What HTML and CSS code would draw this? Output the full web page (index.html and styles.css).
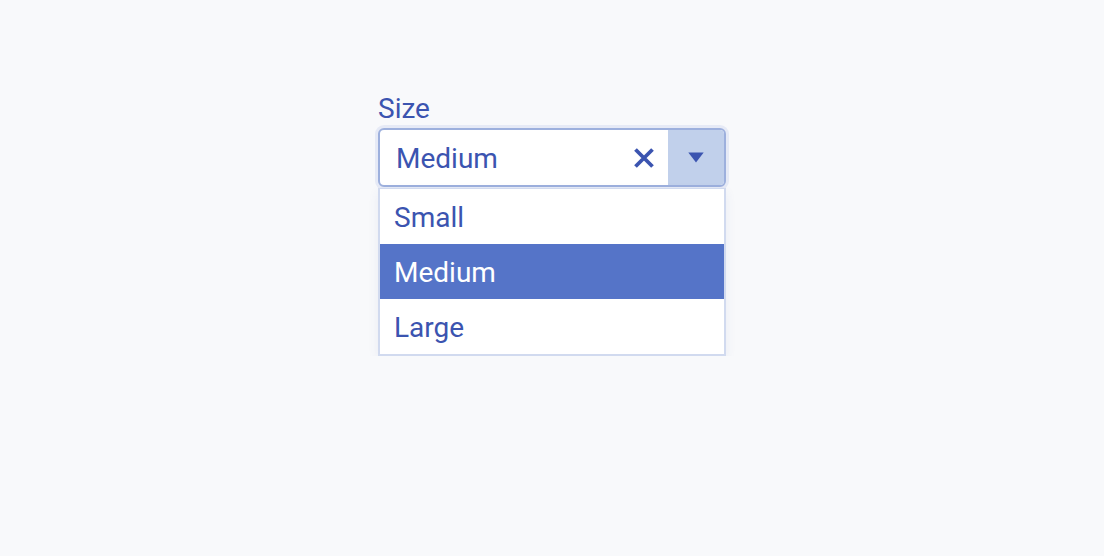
FILE: index.html
```html
<!DOCTYPE html>
<html lang="en">
<head>
<meta charset="utf-8">
<title>Size select</title>
<link rel="stylesheet" href="styles.css">
</head>
<body>
<div class="field">
  <label class="label">Size</label>
  <div class="control">
    <span class="value">Medium</span>
    <button class="clear" aria-label="Clear">
      <svg width="20" height="20" viewBox="0 0 20 20"><path d="M1.5 1.5 L18.5 18.5 M18.5 1.5 L1.5 18.5" stroke="#3b54b0" stroke-width="3.8" stroke-linecap="butt" fill="none"/></svg>
    </button>
    <button class="toggle" aria-label="Open">
      <svg width="16" height="11" viewBox="0 0 16 11"><path d="M0.3 0.5 H15.7 L8 10.5 Z" fill="#3b54b0"/></svg>
    </button>
  </div>
  <ul class="menu">
    <li class="option">Small</li>
    <li class="option selected">Medium</li>
    <li class="option">Large</li>
  </ul>
</div>
</body>
</html>
```
FILE: styles.css
```css
html, body {
  margin: 0;
  padding: 0;
  background: #f8f9fb;
  font-family: Roboto, "Liberation Sans", sans-serif;
  color: #3b54b0;
}
body {
  padding-top: 92px;
}
.field {
  width: 348px;
  margin: 0 auto;
  display: flex;
  flex-direction: column;
}
.label {
  font-size: 28px;
  line-height: 33px;
  margin-bottom: 3px;
}
.control {
  box-sizing: border-box;
  height: 59px;
  border: 2px solid #9db0dd;
  border-radius: 6px;
  background: #fff;
  box-shadow: 0 0 0 3px #e6eaf6;
  display: flex;
  align-items: stretch;
  overflow: hidden;
}
.value {
  flex: 1;
  display: flex;
  align-items: center;
  padding-left: 16px;
  padding-top: 2px;
  font-size: 28px;
}
.clear {
  border: 0;
  background: transparent;
  padding: 0;
  width: 48px;
  display: flex;
  align-items: center;
  justify-content: center;
  padding-top: 1px;
}
.toggle {
  border: 0;
  padding: 0;
  width: 56px;
  background: #c1d0eb;
  display: flex;
  align-items: center;
  justify-content: center;
  padding-bottom: 1px;
}
.menu {
  list-style: none;
  margin: 1px 0 0;
  padding: 0;
  background: #fff;
  border-style: solid;
  border-color: #d1daef;
  border-width: 1px 2px 2px;
  box-shadow: 0 4px 10px rgba(60, 80, 150, 0.08);
}
.option {
  box-sizing: border-box;
  height: 55px;
  display: flex;
  align-items: center;
  padding-left: 14px;
  padding-top: 2px;
  font-size: 28px;
}
.option.selected {
  background: #5574c8;
  color: #fff;
}
```
